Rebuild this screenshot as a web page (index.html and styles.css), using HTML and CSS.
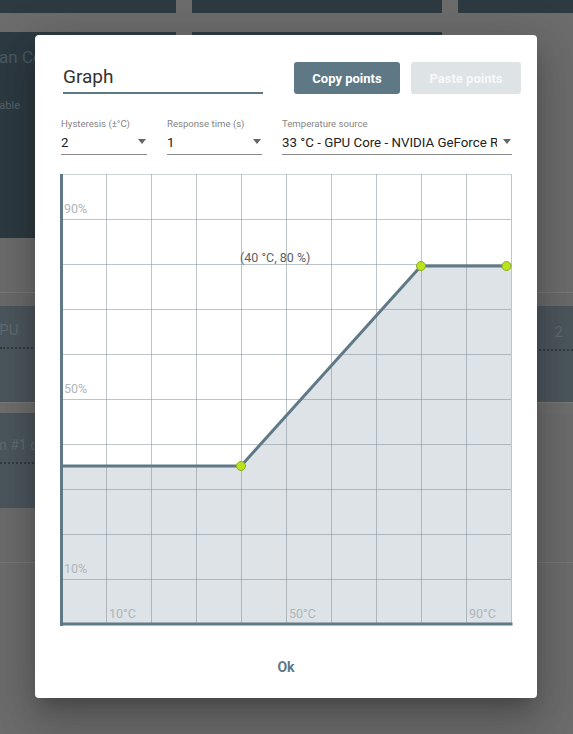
FILE: index.html
```html
<!DOCTYPE html>
<html>
<head>
<meta charset="utf-8">
<title>Graph</title>
<link rel="stylesheet" href="styles.css">
</head>
<body>
<div class="app">
  <div class="row row-top">
    <div class="card"></div>
    <div class="card"></div>
    <div class="card"></div>
  </div>
  <div class="row row-main">
    <div class="card card-info">
      <div class="bg-title">Fan Control</div>
      <div class="bg-sub">Enable</div>
    </div>
    <div class="card"></div>
  </div>
  <div class="band band-a"></div>
  <div class="panel">
    <div class="panel-left">
      <div class="panel-text shift">GPU</div>
      <div class="dots"></div>
    </div>
    <div class="panel-right">
      <div class="panel-text">2</div>
      <div class="dots"></div>
    </div>
  </div>
  <div class="band band-b"></div>
  <div class="panel-half">
    <div class="panel-text shift2">Custom #1 curve</div>
    <div class="dots"></div>
  </div>
  <div class="band band-c"></div>
</div>

<div class="dialog">
  <div class="dlg-head">
    <div class="name-field">Graph</div>
    <div class="actions">
      <div class="btn btn-copy">Copy points</div>
      <div class="btn btn-paste">Paste points</div>
    </div>
  </div>

  <div class="selects">
    <div class="select sel-hyst">
      <div class="sel-label">Hysteresis (±°C)</div>
      <div class="sel-value"><span class="sel-text">2</span><span class="caret"></span></div>
    </div>
    <div class="select sel-resp">
      <div class="sel-label">Response time (s)</div>
      <div class="sel-value"><span class="sel-text">1</span><span class="caret"></span></div>
    </div>
    <div class="select sel-temp">
      <div class="sel-label">Temperature source</div>
      <div class="sel-value"><span class="sel-text">33 °C - GPU Core - NVIDIA GeForce RTX 3080</span><span class="caret"></span></div>
    </div>
  </div>

  <svg class="chart" viewBox="59 172 454 454" width="454" height="454" xmlns="http://www.w3.org/2000/svg">
    <polygon points="62,466 241,466 421,266 511,266 511,624 62,624" fill="#dde3e7"/>
    <g stroke="#7d8c94" stroke-opacity="0.5" stroke-width="1">
      <line x1="61" y1="174.5" x2="511" y2="174.5" stroke-opacity="0.35"/>
      <line x1="61" y1="219.5" x2="511" y2="219.5"/>
      <line x1="61" y1="264.5" x2="511" y2="264.5"/>
      <line x1="61" y1="309.5" x2="511" y2="309.5"/>
      <line x1="61" y1="354.5" x2="511" y2="354.5"/>
      <line x1="61" y1="399.5" x2="511" y2="399.5"/>
      <line x1="61" y1="444.5" x2="511" y2="444.5"/>
      <line x1="61" y1="489.5" x2="511" y2="489.5"/>
      <line x1="61" y1="534.5" x2="511" y2="534.5"/>
      <line x1="61" y1="579.5" x2="511" y2="579.5"/>
      <line x1="106.5" y1="174" x2="106.5" y2="624"/>
      <line x1="151.5" y1="174" x2="151.5" y2="624"/>
      <line x1="196.5" y1="174" x2="196.5" y2="624"/>
      <line x1="241.5" y1="174" x2="241.5" y2="624"/>
      <line x1="286.5" y1="174" x2="286.5" y2="624"/>
      <line x1="331.5" y1="174" x2="331.5" y2="624"/>
      <line x1="376.5" y1="174" x2="376.5" y2="624"/>
      <line x1="421.5" y1="174" x2="421.5" y2="624"/>
      <line x1="466.5" y1="174" x2="466.5" y2="624"/>
      <line x1="511.5" y1="174" x2="511.5" y2="624"/>
    </g>
    <rect x="60" y="174" width="3" height="452" fill="#607986"/>
    <rect x="60" y="622.5" width="452.5" height="3" fill="#607986"/>
    <g class="axis-label" fill="#b0b5b9" font-size="12.5">
      <text x="64" y="213">90%</text>
      <text x="64" y="393">50%</text>
      <text x="64" y="573">10%</text>
      <text x="109" y="618">10°C</text>
      <text x="289" y="618">50°C</text>
      <text x="469" y="618">90°C</text>
    </g>
    <polyline points="62,466 241,466 421,266 511,266" fill="none" stroke="#607986" stroke-width="3" stroke-linejoin="round"/>
    <g fill="#b9e31f" stroke="#8ead1c" stroke-width="1">
      <circle cx="241" cy="466" r="4.5"/>
      <circle cx="421" cy="266" r="4.5"/>
      <circle cx="506.5" cy="266" r="4.5"/>
    </g>
    <text class="tip" x="240" y="262" font-size="12.5" fill="#5a5f62">(40 °C, 80 %)</text>
  </svg>

  <div class="dlg-foot"><span class="ok">Ok</span></div>
</div>
</body>
</html>
```

FILE: styles.css
```css
* { box-sizing: border-box; }
html, body { margin: 0; height: 100%; }
body {
  background: #6c6c6c;
  font-family: Roboto, "Noto Sans", sans-serif;
  overflow: hidden;
  position: relative;
}

/* ---------- background app (seen through the modal backdrop) ---------- */
.app { display: flex; flex-direction: column; }
.row {
  display: grid;
  grid-template-columns: 176px 250px 1fr;
  column-gap: 16px;
}
.row-top { height: 13px; }
.row-main { margin-top: 19px; height: 206px; grid-template-columns: 176px 250px; }
.card { background: #2d3a41; }
.card-info { overflow: hidden; padding-top: 15px; }
.bg-title {
  font-size: 17px;
  color: #4a5961;
  margin-left: -10px;
  white-space: nowrap;
}
.bg-sub {
  margin-top: 32px;
  font-size: 11px;
  color: #56646b;
  margin-left: -13px;
  white-space: nowrap;
}
.band { background: #6c6c6c; }
.band-a { height: 68px; border-bottom: 13px solid #6a6a6a; box-shadow: inset 0 -1px 0 #787878; }
.band-b { height: 11px; background: #6e6e6e; border-top: 1px solid #7a7a7a; }
.band-c { height: 55px; border-bottom: 1px solid #777; }
.panel {
  height: 96px;
  background: #4c565d;
  display: flex;
  justify-content: space-between;
  overflow: hidden;
}
.panel-left { width: 60px; padding-top: 14px; overflow: hidden; }
.panel-right { width: 34px; padding-top: 16px; text-align: right; }
.panel-right .panel-text { padding-right: 10px; }
.panel-text {
  font-size: 15px;
  color: #5f6b72;
  white-space: nowrap;
  line-height: 20px;
}
.shift { margin-left: -11px; }
.dots { margin-top: 7px; border-top: 2px dotted #2f3b41; }
.panel-half {
  width: 270px;
  height: 95px;
  background: #4c565d;
  padding-top: 22px;
  overflow: hidden;
}
.shift2 { margin-left: -42px; font-size: 14px; }

/* ---------- dialog ---------- */
.dialog {
  position: absolute;
  left: 35px;
  top: 35px;
  width: 502px;
  background: #fff;
  border-radius: 4px;
  padding: 27px 0 21px;
  box-shadow: 0 11px 15px -7px rgba(0,0,0,.2), 0 24px 38px 3px rgba(0,0,0,.14), 0 9px 46px 8px rgba(0,0,0,.12);
}
.dlg-head {
  display: flex;
  justify-content: space-between;
  padding: 0 16px 0 28px;
}
.name-field {
  width: 200px;
  height: 32px;
  border-bottom: 2px solid #5f7886;
  padding-bottom: 4px;
  display: flex;
  align-items: flex-end;
  font-size: 19px;
  line-height: 22px;
  color: #333;
}
.actions { display: flex; gap: 11px; }
.btn {
  height: 32px;
  border-radius: 3px;
  font-size: 13px;
  font-weight: 700;
  display: flex;
  align-items: center;
  justify-content: center;
}
.btn-copy { width: 106px; background: #5e7885; color: #fff; }
.btn-paste { width: 110px; background: #dee3e6; color: #f6f8f9; }

.selects {
  display: flex;
  gap: 20px;
  padding: 0 25px 0 26px;
  margin-top: 23.5px;
}
.sel-hyst { width: 86px; }
.sel-resp { width: 95px; }
.sel-temp { width: 230px; }
.sel-label {
  font-size: 9.6px;
  line-height: 12px;
  color: #858585;
  margin-bottom: 4px;
  white-space: nowrap;
}
.sel-value {
  display: flex;
  align-items: center;
  height: 21px;
  padding-bottom: 2px;
  border-bottom: 1px solid #8a8a8a;
  font-size: 13.3px;
  line-height: 18px;
  color: #222;
}
.sel-text {
  flex: 1;
  min-width: 0;
  white-space: nowrap;
  overflow: hidden;
  margin-right: 6px;
}
.caret {
  width: 0;
  height: 0;
  border-left: 4px solid transparent;
  border-right: 4px solid transparent;
  border-top: 5px solid #666;
  margin-right: 1px;
  margin-top: -2px;
}

.chart {
  display: block;
  margin: 17.5px 0 0 24px;
  font-family: Roboto, "Noto Sans", sans-serif;
}

.dlg-foot {
  margin-top: 31px;
  text-align: center;
  line-height: 20px;
}
.ok {
  font-size: 14px;
  font-weight: 700;
  color: #5f7886;
}
```
